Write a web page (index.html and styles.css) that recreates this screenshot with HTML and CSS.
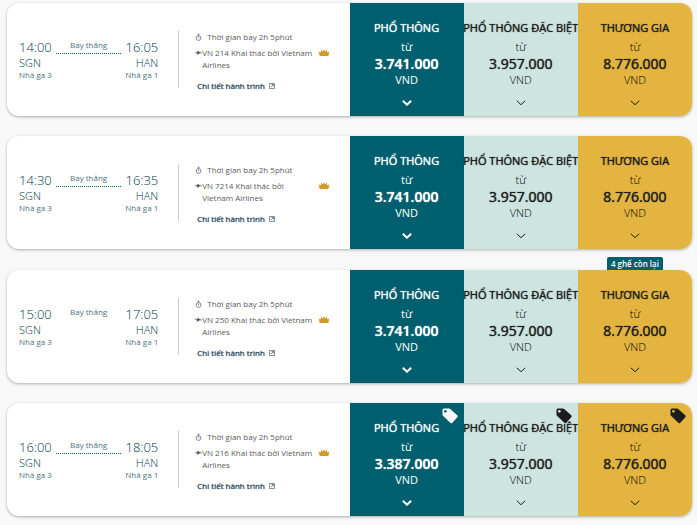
FILE: index.html
```
<!DOCTYPE html>
<html lang="vi">
<head>
<meta charset="utf-8">
<meta name="viewport" content="width=device-width, initial-scale=1">
<title>Chuyến bay SGN – HAN</title>
<link rel="stylesheet" href="styles.css">
</head>
<body>
<svg class="sprite" aria-hidden="true">
  <symbol id="clock" viewBox="0 0 8 8"><circle cx="3.500" cy="5" r="2.400" fill="none" stroke="currentColor" stroke-width=".7"/><path d="M2.500 1.200h2M3.500 1.200v1.400M3.500 3.800v1.400" fill="none" stroke="currentColor" stroke-width=".7"/></symbol>
  <symbol id="plane" viewBox="0 0 7 6"><path d="M0 1.700h.6l.8.8h1.300L2.200 1h.7l1.900 1.500h1.400q.6.1.6.4t-.6.400H4.400L2.500 4.800h-.6l.8-1.500H1.200z" fill="currentColor"/></symbol>
  <symbol id="lotus" viewBox="0 0 12 8"><path d="M6 0l1.100 2.600L9.300.5 9 3.300l2.500-.8-1.100 2L12 5l-2 1 .8 1.300L8 7H4l-2.800.3L2 6 0 5l1.600-.5-1.100-2 2.500.8L2.700.5l2.200 2.100z" fill="currentColor"/></symbol>
  <symbol id="external" viewBox="0 0 6 6"><path d="M.5.5h5v5h-5zM2 4L4.500 1.500M2.500 1.500h2v2" fill="none" stroke="currentColor" stroke-width=".6"/></symbol>
  <symbol id="chevron" viewBox="0 0 10 6"><path d="M.8.8L5 4.700 9.200.8" fill="none" stroke="currentColor"/></symbol>
  <symbol id="tag" viewBox="0 0 16 16"><path fill-rule="evenodd" d="M.5 2Q.5.500 2 .500h4.800q.8 0 1.400.5l7 6.200q1 1 .1 2l-5 5.500q-1 1-2 .1L1.200 8.100Q.5 7.500.5 6.600zM3.400 1.900a1.400 1.400 0 1 0 0 2.800 1.400 1.400 0 1 0 0-2.800z" fill="currentColor"/></symbol>
</svg>
<main class="flights">
  <article class="flight">
    <div class="summary">
      <div class="route">
        <div class="stop"><time class="hour">14:00</time><span class="airport">SGN</span><span class="terminal">Nhà ga 3</span></div>
        <div class="path">Bay thẳng</div>
        <div class="stop stop-end"><time class="hour">16:05</time><span class="airport">HAN</span><span class="terminal">Nhà ga 1</span></div>
      </div>
      <div class="details">
        <p class="duration"><svg class="clock"><use href="#clock"/></svg>Thời gian bay 2h 5phút</p>
        <p class="operator"><svg class="plane"><use href="#plane"/></svg><span class="carrier">VN 214 Khai thác bởi Vietnam Airlines</span><svg class="lotus"><use href="#lotus"/></svg></p>
        <a class="more" href="#">Chi tiết hành trình<svg class="external"><use href="#external"/></svg></a>
      </div>
    </div>
    <button class="fare economy"><span class="cabin">PHỔ THÔNG</span><span class="from">từ</span><span class="price">3.741.000</span><span class="currency">VND</span><svg class="chevron"><use href="#chevron"/></svg></button>
    <button class="fare premium"><span class="cabin">PHỔ THÔNG ĐẶC BIỆT</span><span class="from">từ</span><span class="price">3.957.000</span><span class="currency">VND</span><svg class="chevron"><use href="#chevron"/></svg></button>
    <button class="fare business"><span class="cabin">THƯƠNG GIA</span><span class="from">từ</span><span class="price">8.776.000</span><span class="currency">VND</span><svg class="chevron"><use href="#chevron"/></svg></button>
  </article>
  <article class="flight">
    <div class="summary">
      <div class="route">
        <div class="stop"><time class="hour">14:30</time><span class="airport">SGN</span><span class="terminal">Nhà ga 3</span></div>
        <div class="path">Bay thẳng</div>
        <div class="stop stop-end"><time class="hour">16:35</time><span class="airport">HAN</span><span class="terminal">Nhà ga 1</span></div>
      </div>
      <div class="details">
        <p class="duration"><svg class="clock"><use href="#clock"/></svg>Thời gian bay 2h 5phút</p>
        <p class="operator"><svg class="plane"><use href="#plane"/></svg><span class="carrier">VN 7214 Khai thác bởi Vietnam Airlines</span><svg class="lotus"><use href="#lotus"/></svg></p>
        <a class="more" href="#">Chi tiết hành trình<svg class="external"><use href="#external"/></svg></a>
      </div>
    </div>
    <button class="fare economy"><span class="cabin">PHỔ THÔNG</span><span class="from">từ</span><span class="price">3.741.000</span><span class="currency">VND</span><svg class="chevron"><use href="#chevron"/></svg></button>
    <button class="fare premium"><span class="cabin">PHỔ THÔNG ĐẶC BIỆT</span><span class="from">từ</span><span class="price">3.957.000</span><span class="currency">VND</span><svg class="chevron"><use href="#chevron"/></svg></button>
    <button class="fare business"><span class="cabin">THƯƠNG GIA</span><span class="from">từ</span><span class="price">8.776.000</span><span class="currency">VND</span><svg class="chevron"><use href="#chevron"/></svg></button>
  </article>
  <article class="flight">
    <div class="summary">
      <div class="route">
        <div class="stop"><time class="hour">15:00</time><span class="airport">SGN</span><span class="terminal">Nhà ga 3</span></div>
        <div class="path path-plain">Bay thẳng</div>
        <div class="stop stop-end"><time class="hour">17:05</time><span class="airport">HAN</span><span class="terminal">Nhà ga 1</span></div>
      </div>
      <div class="details">
        <p class="duration"><svg class="clock"><use href="#clock"/></svg>Thời gian bay 2h 5phút</p>
        <p class="operator"><svg class="plane"><use href="#plane"/></svg><span class="carrier">VN 250 Khai thác bởi Vietnam Airlines</span><svg class="lotus"><use href="#lotus"/></svg></p>
        <a class="more" href="#">Chi tiết hành trình<svg class="external"><use href="#external"/></svg></a>
      </div>
    </div>
    <button class="fare economy"><span class="cabin">PHỔ THÔNG</span><span class="from">từ</span><span class="price">3.741.000</span><span class="currency">VND</span><svg class="chevron"><use href="#chevron"/></svg></button>
    <button class="fare premium"><span class="cabin">PHỔ THÔNG ĐẶC BIỆT</span><span class="from">từ</span><span class="price">3.957.000</span><span class="currency">VND</span><svg class="chevron"><use href="#chevron"/></svg></button>
    <button class="fare business"><span class="seats">4 ghế còn lại</span><span class="cabin">THƯƠNG GIA</span><span class="from">từ</span><span class="price">8.776.000</span><span class="currency">VND</span><svg class="chevron"><use href="#chevron"/></svg></button>
  </article>
  <article class="flight">
    <div class="summary">
      <div class="route">
        <div class="stop"><time class="hour">16:00</time><span class="airport">SGN</span><span class="terminal">Nhà ga 3</span></div>
        <div class="path">Bay thẳng</div>
        <div class="stop stop-end"><time class="hour">18:05</time><span class="airport">HAN</span><span class="terminal">Nhà ga 1</span></div>
      </div>
      <div class="details">
        <p class="duration"><svg class="clock"><use href="#clock"/></svg>Thời gian bay 2h 5phút</p>
        <p class="operator"><svg class="plane"><use href="#plane"/></svg><span class="carrier">VN 216 Khai thác bởi Vietnam Airlines</span><svg class="lotus"><use href="#lotus"/></svg></p>
        <a class="more" href="#">Chi tiết hành trình<svg class="external"><use href="#external"/></svg></a>
      </div>
    </div>
    <button class="fare economy"><svg class="tag"><use href="#tag"/></svg><span class="cabin">PHỔ THÔNG</span><span class="from">từ</span><span class="price">3.387.000</span><span class="currency">VND</span><svg class="chevron"><use href="#chevron"/></svg></button>
    <button class="fare premium"><svg class="tag"><use href="#tag"/></svg><span class="cabin">PHỔ THÔNG ĐẶC BIỆT</span><span class="from">từ</span><span class="price">3.957.000</span><span class="currency">VND</span><svg class="chevron"><use href="#chevron"/></svg></button>
    <button class="fare business"><svg class="tag"><use href="#tag"/></svg><span class="cabin">THƯƠNG GIA</span><span class="from">từ</span><span class="price">8.776.000</span><span class="currency">VND</span><svg class="chevron"><use href="#chevron"/></svg></button>
  </article>
</main>
</body>
</html>
```
FILE: styles.css
```
* { box-sizing: border-box; }
body {
  margin: 0;
  background: #f8f8f8;
  color: #00495c;
  font-family: "Open Sans", "Noto Sans", sans-serif;
}
.sprite { position: absolute; width: 0; height: 0; }
.flights {
  display: flex;
  flex-direction: column;
  justify-content: space-between;
  gap: 20px;
  min-height: 100vh;
  padding: 3px 5px 9px 7px;
}
.flight {
  display: grid;
  grid-template-columns: minmax(0, 3fr) repeat(3, minmax(0, 1fr));
  border-radius: 12px;
  background: #fff;
  box-shadow: 0 1px 3px rgba(0, 0, 0, .3);
}
.summary {
  display: grid;
  grid-template-columns: minmax(0, 1fr) minmax(0, 1fr);
  align-items: start;
  padding: 28px 0 0;
}
.route {
  display: flex;
  padding: 7px 20px 0 12px;
}
.stop { display: flex; flex-direction: column; flex: none; }
.stop-end { align-items: flex-end; }
.hour { font-size: 13px; line-height: 18px; }
.airport { font-size: 11px; line-height: 13px; }
.terminal { font-size: 8px; line-height: 12px; color: #4d7180; }
.path {
  flex: 1;
  height: 16px;
  margin: 0 4px;
  border-bottom: 1px dotted #005f6e;
  font-size: 8px;
  line-height: 14px;
  text-align: center;
  color: #4d7180;
}
.path-plain { border-color: transparent; }
.details {
  height: 57px;
  padding: 0 16px;
  border-left: 1px solid #c5cbda;
  font-size: 8px;
  line-height: 12px;
  color: #5a5a5a;
}
.details p { margin: 0; }
.duration { display: flex; align-items: center; gap: 4px; }
.clock { width: 8px; height: 8px; color: #4d5670; }
.operator { display: flex; gap: 0; padding-top: 4px; }
.plane { flex: none; width: 7px; height: 6px; margin-top: 3px; color: #333; }
.carrier { flex: 1; max-width: 112px; }
.lotus { flex: none; width: 12px; height: 8px; margin: 2px 0 0 4px; color: #cf9a2b; }
.more {
  display: flex;
  align-items: center;
  gap: 4px;
  padding: 9px 0 0 2px;
  color: #2f4a60;
  text-decoration: none;
  text-shadow: 0 0 1px currentColor;
}
.external { width: 6px; height: 6px; }
.fare {
  position: relative;
  display: flex;
  flex-direction: column;
  align-items: center;
  padding: 17px 0 6px;
  border: 0;
  font-family: inherit;
  color: #1c1c1c;
  cursor: pointer;
}
.economy { background: #005f6e; color: #fff; }
.premium { background: #cee4e0; }
.business { background: #e4b440; border-radius: 0 12px 12px 0; }
.cabin {
  margin-bottom: 4px;
  font-size: 11px;
  line-height: 16px;
  white-space: nowrap;
}
.from { font-size: 11px; line-height: 14px; }
.price { font-size: 14px; line-height: 20px; }
.currency { font-size: 11px; line-height: 12px; }
.cabin, .price { text-shadow: 0 0 1px currentColor; }
.hour, .airport { font-weight: 300; color: #003a4d; }
.premium .from, .business .from, .premium .currency, .business .currency { font-weight: 300; color: #000; }
.economy .price { font-weight: 600; }
.economy .cabin { font-weight: 500; }
.chevron { width: 10px; height: 6px; margin: 14px 0 4px; }
.economy .chevron { stroke-width: 2px; }
.tag { position: absolute; top: 5px; right: 6px; width: 16px; height: 16px; }
.seats {
  position: absolute;
  bottom: 100%;
  left: 50%;
  transform: translateX(-50%);
  padding: 0 4px;
  border-radius: 2px 2px 0 0;
  background: #005f6e;
  color: #fff;
  font-size: 8px;
  font-weight: 600;
  line-height: 13px;
  white-space: nowrap;
}
```
